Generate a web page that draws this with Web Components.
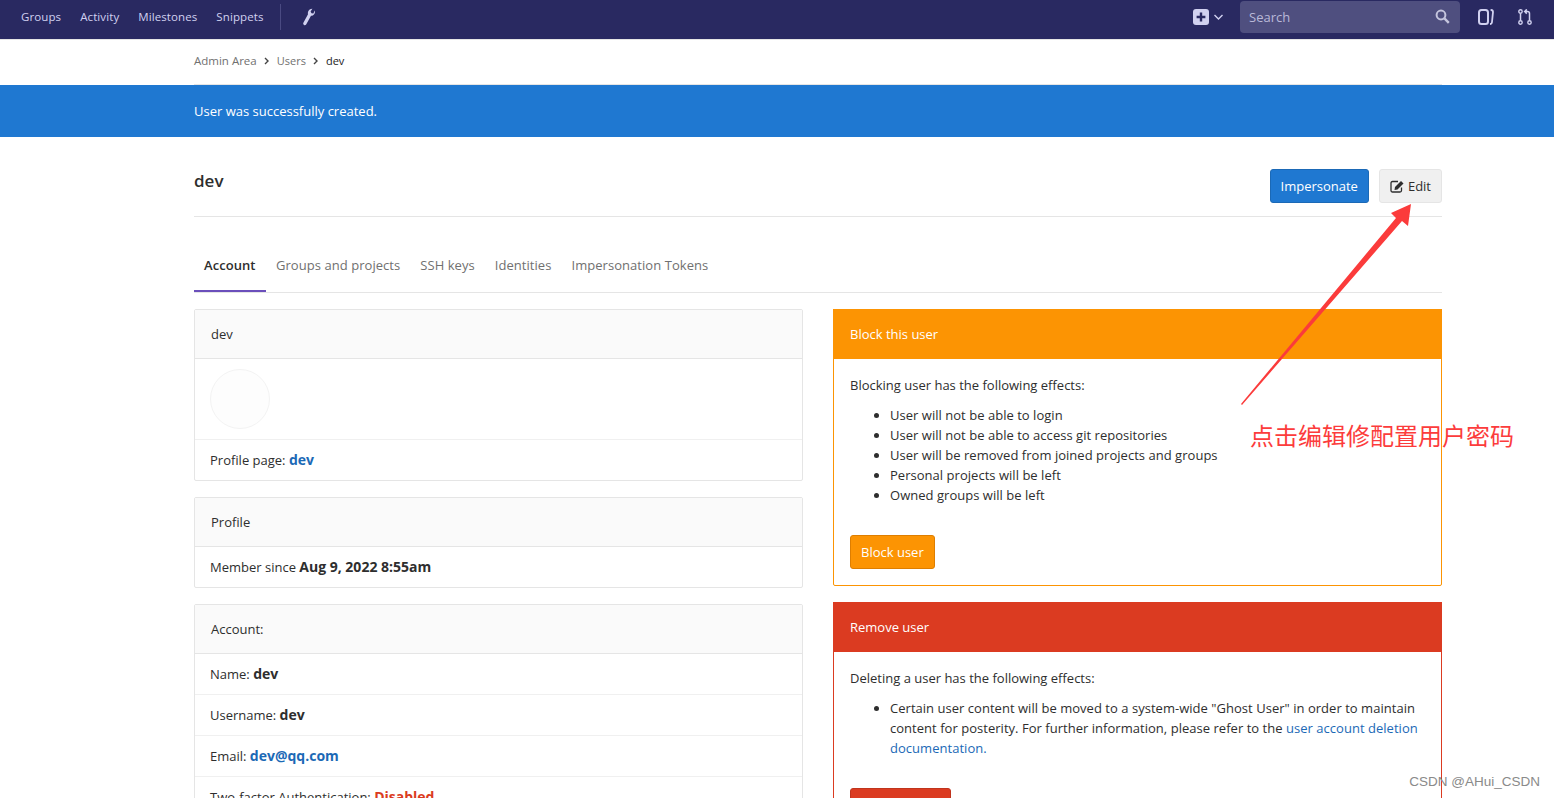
<!DOCTYPE html>
<html lang="en"><head><meta charset="utf-8"><title>dev</title>
<style>
html,body{margin:0;padding:0;background:#fff;height:798px;overflow:hidden}
body{font:13px/20px "Open Sans","Noto Sans CJK SC",sans-serif;color:#2e2e2e;position:relative}
b{font-size:14px}
li{letter-spacing:.03px}
</style></head><body>
<app-nav></app-nav>
<app-crumbs></app-crumbs>
<app-flash>User was successfully created.</app-flash>
<app-title></app-title>
<app-tabs></app-tabs>
<app-grid>
  <info-card slot="left" title-text="dev">
    <div class="avatar-row" style="height:81px;box-sizing:border-box;padding:10px 15px"><div style="width:58px;height:58px;border-radius:50%;background:#fdfdfd;border:1px solid #f3f3f3"></div></div>
    <info-row>Profile page: <b style="color:#1b69b6">dev</b></info-row>
  </info-card>
  <info-card slot="left" title-text="Profile">
    <info-row>Member since <b>Aug 9, 2022 8:55am</b></info-row>
  </info-card>
  <info-card slot="left" title-text="Account:">
    <info-row>Name: <b>dev</b></info-row>
    <info-row>Username: <b>dev</b></info-row>
    <info-row>Email: <b style="color:#1b69b6">dev@qq.com</b></info-row>
    <info-row>Two-factor Authentication: <b style="color:#db3b21">Disabled</b></info-row>
  </info-card>
  <action-card slot="right" title-text="Block this user" color="#fc9403" dark="#de7e00" label="Block user" intro="Blocking user has the following effects:">
    <li>User will not be able to login</li>
    <li>User will not be able to access git repositories</li>
    <li>User will be removed from joined projects and groups</li>
    <li>Personal projects will be left</li>
    <li>Owned groups will be left</li>
  </action-card>
  <action-card slot="right" title-text="Remove user" color="#db3b21" dark="#c0341d" label="Remove user" intro="Deleting a user has the following effects:">
    <li>Certain user content will be moved to a system-wide "Ghost User" in order to maintain content for posterity. For further information, please refer to the <a href="#" style="color:#1b69b6;text-decoration:none">user account deletion documentation.</a></li>
  </action-card>
</app-grid>
<screen-note></screen-note>
<script>
function def(name,html,extra){
  customElements.define(name,class extends HTMLElement{
    constructor(){super();this.attachShadow({mode:'open'}).innerHTML=html;}
    connectedCallback(){if(extra)extra(this,this.shadowRoot);}
  });
}
def('app-nav',`<style>
:host{display:flex;align-items:center;height:34px;padding:0 0 5px 21px;background:#292961;border-bottom:1px solid #e5e5e5;color:#d1d1f0;font-size:11.5px;box-sizing:content-box}
a{color:inherit;margin-right:19px;white-space:nowrap;letter-spacing:.1px}
.sep{width:1px;height:26px;background:#4a4a82;margin:0 21px 0 -3px}
.right{margin-left:auto;display:flex;align-items:center}
.search{width:220px;height:32px;box-sizing:border-box;background:#4f4f7f;border-radius:4px;display:flex;align-items:center;justify-content:space-between;padding:0 9px;color:#b9b9d8;margin:0 18px 0 15px;font-size:13px}
svg{display:block}
</style>
<a>Groups</a><a>Activity</a><a>Milestones</a><a>Snippets</a><span class="sep"></span>
<svg width="13" height="18" viewBox="0 0 13 18"><path fill="#d1d1f0" d="M12.800 2.600c.5 1.800-.1 3.700-1.700 4.700-.7.4-1.400.5-2.100.5L4.300 16.300c-.5.9-1.500 1.200-2.300.8-.8-.5-1.100-1.500-.6-2.400L6 6.300c-.5-1.800.3-4 2.100-5 .8-.4 1.600-.6 2.300-.5L8.600 3.600l.9 1.700 1.800.1z"/></svg>
<div class="right">
<svg width="32" height="16" viewBox="0 0 32 16"><rect width="16" height="16" rx="3" fill="#d1d1f0"/><path d="M8 3.600v8.800M3.600 8h8.800" stroke="#292961" stroke-width="2.400"/><path d="M21.500 6l4 4 4-4" fill="none" stroke="#d1d1f0" stroke-width="1.400"/></svg>
<div class="search"><span>Search</span><svg width="15" height="15" viewBox="0 0 15 15" style="margin-top:-2px;margin-right:1px"><circle cx="6" cy="6" r="4.400" fill="none" stroke="#c5c5dd" stroke-width="2"/><path d="M9.400 9.400l4.400 4.400" stroke="#c5c5dd" stroke-width="2.400"/></svg></div>
<svg width="16" height="16" viewBox="0 0 16 16" style="margin-right:24px"><rect x="1" y="1" width="9" height="14" rx="2.500" fill="none" stroke="#d1d1f0" stroke-width="2"/><path d="M12.600 1h.4c1.200 0 2 .8 2 2l-1 10c-.1 1.200-.8 2-2 2" fill="none" stroke="#d1d1f0" stroke-width="1.800"/></svg>
<svg width="14" height="16" viewBox="0 0 14 16" style="margin-right:22px"><circle cx="2.500" cy="2.500" r="1.700" fill="none" stroke="#d1d1f0" stroke-width="1.400"/><circle cx="2.500" cy="13.500" r="1.700" fill="none" stroke="#d1d1f0" stroke-width="1.400"/><circle cx="11.500" cy="13.500" r="1.700" fill="none" stroke="#d1d1f0" stroke-width="1.400"/><path d="M2.500 4.500v7M11.500 11.500V4.500c0-1.200-.8-2-2-2H7M8.800.4L6.600 2.500l2.200 2.100" fill="none" stroke="#d1d1f0" stroke-width="1.500"/></svg>
</div>`);
def('app-crumbs',`<style>
:host{display:block;padding:0 112px 0 194px}
div{height:42px;padding-bottom:2px;border-bottom:1px solid #e5e5e5;display:flex;align-items:center;font-size:11.5px;color:#707070;width:1248px;box-sizing:content-box}
b{font-weight:400;color:#1c1c1c;font-size:11px}
.u{font-size:11px}
svg{margin:0 7px}
</style><div><span>Admin Area</span><svg width="6" height="8" viewBox="0 0 6 8"><path d="M1 1l3 3-3 3" fill="none" stroke="#444" stroke-width="1.400"/></svg><span class="u">Users</span><svg width="6" height="8" viewBox="0 0 6 8"><path d="M1 1l3 3-3 3" fill="none" stroke="#444" stroke-width="1.400"/></svg><b>dev</b></div>`);
def('app-flash',`<style>:host{display:flex;align-items:center;height:52px;background:#1f78d1;color:#fff;padding-left:194px}</style><slot></slot>`);
def('app-title',`<style>
:host{display:flex;justify-content:space-between;align-items:flex-start;margin:0 112px 0 194px;height:79px;border-bottom:1px solid #e5e5e5;box-sizing:content-box}
h3{margin:32px 0 0;font-size:17px;line-height:24px;font-weight:600;color:#2e2e2e}
.btns{display:flex;gap:10px;margin-top:32px}
.b{height:34px;box-sizing:border-box;border-radius:3px;display:flex;align-items:center;padding:0 10px;white-space:nowrap}
.p{background:#1f78d1;color:#fff;border:1px solid #1b69b6}
.d{background:#f0f0f0;border:1px solid #e5e5e5;color:#2e2e2e;gap:3px}
</style><h3>dev</h3><div class="btns"><div class="b p">Impersonate</div><div class="b d"><svg width="15" height="13" viewBox="0 0 15 13"><path d="M11.500 7.500v3c0 .9-.6 1.500-1.500 1.500H2.500C1.600 12 1 11.400 1 10.500V3c0-.9.600-1.500 1.500-1.500H8" fill="none" stroke="#2e2e2e" stroke-width="1.300"/><path fill="#2e2e2e" d="M5 7l6-6 2.500 2.500-6 6L4.500 10z"/></svg>Edit</div></div>`);
def('app-tabs',`<style>
:host{display:flex;margin:27px 112px 0 194px;height:48px;border-bottom:1px solid #e5e5e5;box-sizing:content-box;color:#707070}
a{display:flex;align-items:center;padding:0 10px 6px;height:48px;box-sizing:border-box;white-space:nowrap;letter-spacing:.05px}
.on{color:#2e2e2e;font-weight:600;border-bottom:2px solid #6b4fbb;padding-bottom:4px;width:72px}
</style><a class="on">Account</a><a>Groups and projects</a><a>SSH keys</a><a>Identities</a><a>Impersonation Tokens</a>`);
def('app-grid',`<style>
:host{display:grid;grid-template-columns:609px 609px;column-gap:30px;margin:16px 112px 0 194px}
.c{display:flex;flex-direction:column;gap:16px}
</style><div class="c"><slot name="left"></slot></div><div class="c"><slot name="right"></slot></div>`);
def('info-card',`<style>
:host{display:block;border:1px solid #e5e5e5;border-radius:2px}
.h{box-sizing:border-box;background:#fafafa;border-bottom:1px solid #e5e5e5;padding:14px 16px;height:49px}
::slotted(*){display:block}
::slotted(.avatar-row){border-bottom:1px solid #f0f0f0}
</style><div class="h"></div><slot></slot>`,(el,sr)=>{sr.querySelector('.h').textContent=el.getAttribute('title-text')});
def('info-row',`<style>
:host{display:block;height:41px;box-sizing:border-box;padding:10px 15px;border-bottom:1px solid #f0f0f0}
:host(:last-child){border-bottom:0;height:40px}
</style><slot></slot>`);
def('action-card',`<style>
:host{display:block;border:1px solid var(--c);border-radius:2px}
.h{background:var(--c);color:#fff;padding:15px 17px;box-sizing:border-box;margin:-1px -1px 0;height:50px}
.b{padding:16px 16px 16px}
p{margin:0 0 10px}
ul{margin:0 0 30px;padding-left:40px}
button{display:block;height:34px;border:1px solid var(--d);background:var(--c);color:#fff;font:inherit;border-radius:3px;padding:0 10px}
</style><div class="h"></div><div class="b"><p></p><ul><slot></slot></ul><button></button></div>`,(el,sr)=>{
  el.style.setProperty('--c',el.getAttribute('color'));el.style.setProperty('--d',el.getAttribute('dark'));
  sr.querySelector('.h').textContent=el.getAttribute('title-text');
  sr.querySelector('p').textContent=el.getAttribute('intro');
  sr.querySelector('button').textContent=el.getAttribute('label');
});
def('screen-note',`<style>
:host{position:absolute;inset:0;pointer-events:none;display:block}
svg{position:absolute;left:0;top:0}
.t{position:absolute;left:1250px;top:418px;font:24px/34px "Noto Sans CJK SC",sans-serif;color:#fc3c3c;white-space:nowrap}
.w{position:absolute;right:14px;top:772px;font:13.500px/20px "Liberation Sans",sans-serif;color:#8a8a8a;white-space:nowrap}
</style><svg width="1554" height="798"><path fill="#fb3b3b" d="M1241 404L1396 218l-5-5 20-9-3 22-6-5L1242 405z"/></svg><div class="t">点击编辑修配置用户密码</div><div class="w">CSDN @AHui_CSDN</div>`);
</script>
</body></html>
